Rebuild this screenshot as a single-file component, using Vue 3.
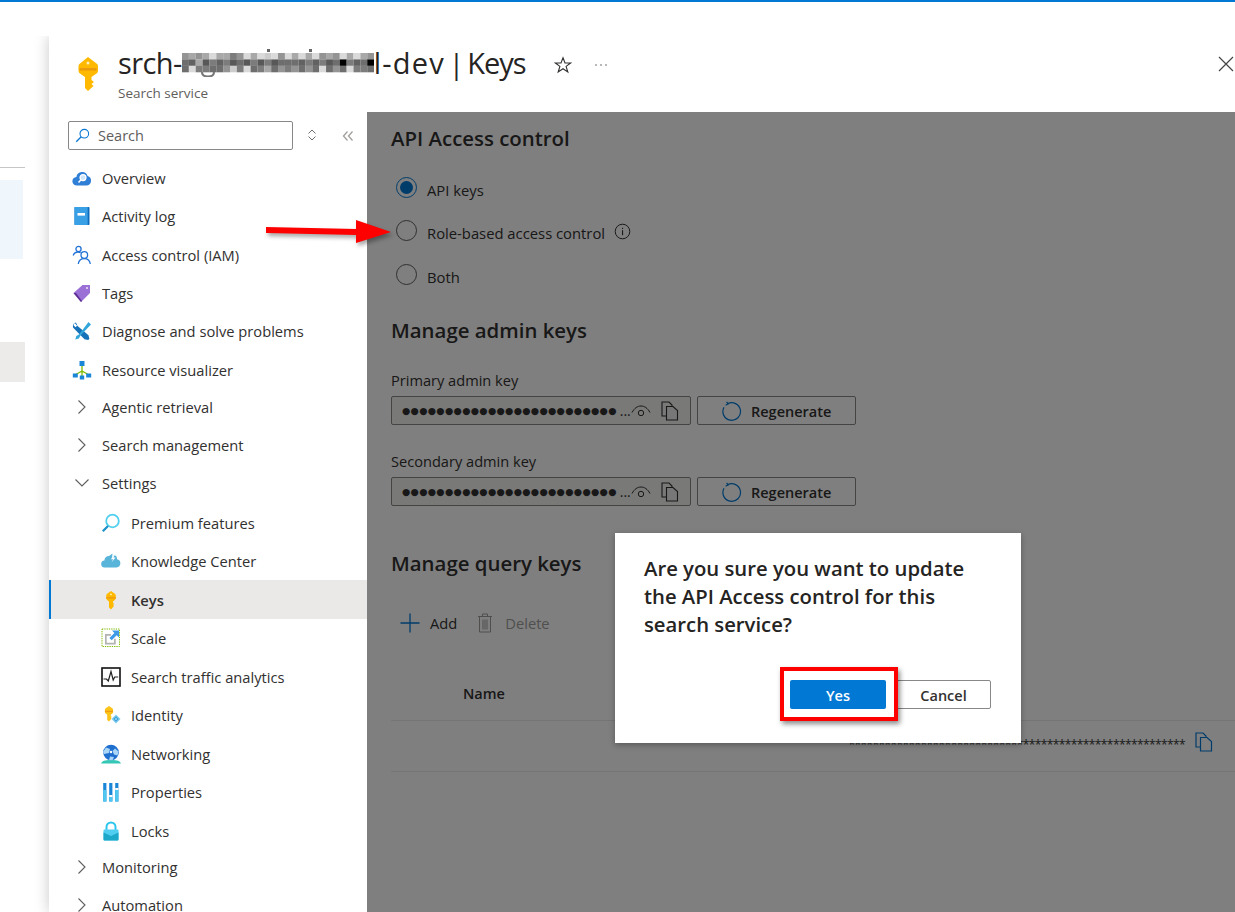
<script setup>
const icons = {
  overview: '<path d="M5 17.5a4.3 4.3 0 0 1-.6-8.6A5.8 5.8 0 0 1 15.6 8 4.9 4.9 0 0 1 15 17.5Z" fill="#2f7fd6"/><circle cx="11" cy="9.6" r="3" fill="#cfe6fb" stroke="#fff" stroke-width="1.2"/><path d="M9 11.8 6.5 14.4" stroke="#fff" stroke-width="1.5"/>',
  activity: '<rect x="2.5" y="1" width="15" height="18" rx=".8" fill="#0f6cbd"/><rect x="2.5" y="1" width="13.2" height="18" rx=".6" fill="#3aa0e6"/><rect x="5.500" y="7" width="7.500" height="2.600" fill="#fff"/>',
  iam: '<g fill="none" stroke="#2272d6" stroke-width="1.3"><circle cx="6.5" cy="4" r="2.6"/><path d="M1.2 10.5C2 8 4 7 6 7c1 0 2 .3 2.6.7"/><circle cx="12.3" cy="10" r="3.3"/><path d="M6.3 19c.4-3.2 2.8-5.3 6-5.3s5.500 2.100 6 5.300"/></g>',
  tags: '<path d="M1.500 10 10.500 2h7.500v8l-9 9Z" fill="#9a6fd6"/><path d="M1.500 10l7.500 9 1-1-6-8Z" fill="#5c2d91"/><circle cx="15" cy="5" r="1.100" fill="#e8dcf8"/>',
  diagnose: '<path d="M3.500 1.500a4 4 0 0 0-2.300 5.200l11.300 11.500 3.700.900 1.200-1.300-.9-3.500L5.300 4.800A4 4 0 0 0 3.500 1.500Z" fill="#1572b8"/><path d="M16.500 1l2.500 2.500-10.500 11-1.700 3-3.500 1 1-3.500 3-1.700Z" fill="#32a5d9"/><path d="M2.700 2l2.500 2.800-1.800 1.500-2-2.400Z" fill="#fff"/>',
  visualizer: '<path d="M10 5v6M3 15l7-4 7 4M10 11v6" stroke="#7fba00" stroke-width="1.300" fill="none"/><rect x="7.500" y="1" width="5" height="5" fill="#1a86d8"/><rect x=".8" y="13.500" width="5" height="4" fill="#1a86d8"/><rect x="14.200" y="13.500" width="5" height="4" fill="#1a86d8"/><rect x="7.800" y="15.500" width="4.400" height="4" fill="#1a86d8"/>',
  premium: '<circle cx="11.500" cy="8" r="6.300" fill="#fff" stroke="#50d0ee" stroke-width="1.800"/><path d="M7 13 1.800 18.200" stroke="#1a8fc8" stroke-width="2.200"/>',
  knowledge: '<path d="M4 16.500a3.500 3.500 0 0 1-.6-7A4.500 4.500 0 0 1 8 5l3.500-2.500L11 7l2-3a4 4 0 0 1 3 4.200 4.200 4.200 0 0 1-.5 8.300Z" fill="#59b4d9"/><path d="M12.800 3.500 10 8.200h2.200L10.500 11.500l4-5h-2.200L14 3.500Z" fill="#fff"/>',
  key: '<path d="M10 1l3.800 2.700c.7.500 1 1 1 1.800v2.500c0 .8-.4 1.400-1 1.900L12 11.500V13l1.200 1-1.200 1 1 1-3 3.500L8 17.500v-6L6.200 9.900c-.6-.5-1-1.100-1-1.900V5.500c0-.8.300-1.300 1-1.800Z" fill="#ffb900"/><rect x="5.200" y="7" width="9.600" height="1.600" fill="#f29c11"/><circle cx="10" cy="4.300" r=".9" fill="#fff3c4"/>',
  scale: '<rect x="1" y="1" width="17.500" height="17.500" fill="none" stroke="#7fba00" stroke-width="1" stroke-dasharray="1.300 1"/><path d="M4 6h6v1.700H5.700v7H13v-4h1.700v5.700H4Z" fill="#b3b3b3"/><path d="M11 2.500h7v7l-2.300-2.300-5 5-2.300-2.300 5-5Z" fill="#3e9ae6"/>',
  traffic: '<rect x="1" y="1" width="18" height="18" fill="#fff" stroke="#111" stroke-width="1.600"/><path d="M2.500 12h3l1.800 2 2.700-9.500 2.200 8.500 1.500-3h3.500" fill="none" stroke="#222" stroke-width="1.200"/>',
  identity: '<path d="M8 1l3.300 2.300c.6.400.8.900.8 1.500v2.200c0 .7-.3 1.200-.8 1.600L9.800 9.800V11l1 .9-1 .8.800.9L8 16.500 6.200 15V9.800L4.700 8.600c-.5-.4-.8-.9-.8-1.600V4.800c0-.6.200-1.100.8-1.500Z" fill="#fcc419"/><rect x="4" y="5.800" width="8" height="1.300" fill="#f29c11"/><path d="M15 9.500l4.500 4.500-4.500 4.500-4.500-4.500Z" fill="#7fcdee"/><path d="M15 11.800l2.200 2.200-2.200 2.200-2.200-2.200Z" fill="none" stroke="#2a8fd0" stroke-width=".9"/>',
  networking: '<path d="M0 19.500c1-2.500 3.500-3.500 10-3.500s9 1 10 3.500Z" fill="#35c7b5"/><circle cx="10" cy="8.500" r="7.800" fill="#1f6fcf"/><path d="M5 3.500l4 1.500-1 4-5 1-1-2Zm9 1 3.500 3-1 4-3.500-1-1.500-3.500Zm-5 8 4 .5-1.500 3.200H8Z" fill="#a9d6f7"/><circle cx="10" cy="8" r="1.200" fill="#fff"/>',
  properties: '<rect x="2.200" y="1" width="3.200" height="18.500" fill="#1a86d8"/><rect x="8.200" y="1" width="3.200" height="18.500" fill="#1a86d8"/><rect x="14.200" y="1" width="3.200" height="18.500" fill="#1a86d8"/><rect x="2.200" y="8" width="3.200" height="11.500" fill="#50c8f0"/><rect x="8.200" y="13" width="3.200" height="2" fill="#fff"/><rect x="8.200" y="15" width="3.200" height="4.500" fill="#50c8f0"/><rect x="14.200" y="6" width="3.200" height="2" fill="#fff"/><rect x="14.200" y="8" width="3.200" height="11.500" fill="#50c8f0"/>',
  locks: '<path d="M5.500 9V6a4.500 4.500 0 0 1 9 0v3" fill="none" stroke="#2cc5ee" stroke-width="2"/><rect x="2.500" y="8.500" width="15" height="11" rx="1" fill="#50cdf0"/><path d="M2.500 11.500 10 15l7.500-3.500v7a1 1 0 0 1-1 1h-13a1 1 0 0 1-1-1Z" fill="#1da7c9"/>'
}

const topItems = [
  { label: 'Overview', icon: 'overview' },
  { label: 'Activity log', icon: 'activity' },
  { label: 'Access control (IAM)', icon: 'iam' },
  { label: 'Tags', icon: 'tags' },
  { label: 'Diagnose and solve problems', icon: 'diagnose' },
  { label: 'Resource visualizer', icon: 'visualizer' }
]
const subItems = [
  { label: 'Premium features', icon: 'premium' },
  { label: 'Knowledge Center', icon: 'knowledge' },
  { label: 'Keys', icon: 'key', active: true },
  { label: 'Scale', icon: 'scale' },
  { label: 'Search traffic analytics', icon: 'traffic' },
  { label: 'Identity', icon: 'identity' },
  { label: 'Networking', icon: 'networking' },
  { label: 'Properties', icon: 'properties' },
  { label: 'Locks', icon: 'locks' }
]

const mosaic = [
  '6767a7756a7a9a6a7a7a676a7a76',
  '4372535242525244435352415341',
  '4a5544695a4574656464a464a554'
]
const shades = {
  2: '#585858', 3: '#626262', 4: '#6e6e6e', 5: '#7c7c7c', 6: '#949494',
  7: '#a8a8a8', 8: '#bcbcbc', 9: '#cccccc', a: '#dadada'
}
const cells = mosaic.flatMap((row, y) =>
  [...row].map((c, x) => ({ x: x * 6.86, y: 4 + y * 6.4, fill: shades[c] }))
)

const adminKeys = ['Primary admin key', 'Secondary admin key']
</script>

<template>
  <div class="page">
    <div class="topbar"></div>
    <div class="stage">
      <div class="behind">
        <div class="behind-line"></div>
        <div class="behind-blue"></div>
        <div class="behind-grey"></div>
      </div>

      <section class="blade">
        <header class="blade-head">
          <svg class="head-key" width="24" height="36" viewBox="0 0 24 36">
            <path d="M12 1l8.500 6.500c1 .8 1.500 1.700 1.500 3v4c0 1.300-.5 2.300-1.500 3L15.500 21v3l2.500 2-2.500 2 2 2-5.500 5-3-3V21l-5-3.500c-1-.7-1.500-1.700-1.500-3v-4c0-1.300.5-2.200 1.500-3Z" fill="#ffb900"/>
            <rect x="3.500" y="12" width="17" height="2.600" fill="#ea9a0c"/>
            <circle cx="12" cy="7" r="1.500" fill="#fff1c0"/>
          </svg>
          <div class="head-text">
            <h1 class="title"><span class="t-s">srch-</span><svg class="mosaic" width="192" height="28" viewBox="0 0 192 28"><rect v-for="(c, i) in cells" :key="i" :x="c.x" :y="c.y" width="6.900" height="6.500" :fill="c.fill" /><path d="M20 23c0 3 2 4.500 6 4.500s6-1.500 6-4.500" fill="none" stroke="#777" stroke-width="2"/><rect x="85" y="0" width="3" height="3" fill="#666"/><rect x="127" y="0" width="3" height="3" fill="#666"/></svg><span class="t-a">l-dev</span><span class="t-sep">|</span><span class="t-b">Keys</span></h1>
            <div class="subtitle">Search service</div>
          </div>
          <svg class="star" width="18" height="18" viewBox="0 0 18 18"><path d="M9 1.800 11 7h5.600l-4.500 3.400 1.700 5.600L9 12.700 4.200 16l1.700-5.600L1.400 7H7Z" fill="none" stroke="#323130" stroke-width="1.100"/></svg>
          <svg class="dots" width="14" height="4" viewBox="0 0 14 4"><circle cx="2" cy="2" r=".8" fill="#605e5c"/><circle cx="7" cy="2" r=".8" fill="#605e5c"/><circle cx="12" cy="2" r=".8" fill="#605e5c"/></svg>
          <svg class="close" width="16" height="16" viewBox="0 0 16 16"><path d="M1 1l14 14M15 1 1 15" stroke="#444" stroke-width="1.200"/></svg>
        </header>

        <div class="blade-body">
          <nav class="side">
            <div class="search-row">
              <div class="search">
                <svg width="15" height="15" viewBox="0 0 15 15"><circle cx="9.300" cy="5.700" r="4.300" fill="none" stroke="#0a78d2" stroke-width="1.100"/><path d="M6.200 8.800 1.200 13.800" stroke="#0a78d2" stroke-width="1.300"/></svg>
                <span>Search</span>
              </div>
              <svg class="updown" width="10" height="12" viewBox="0 0 10 12"><path d="M1.500 4.500 5 1l3.500 3.500M1.500 7.500 5 11l3.500-3.500" fill="none" stroke="#605e5c" stroke-width=".9"/></svg>
              <svg class="collapse" width="12" height="12" viewBox="0 0 12 12"><path d="M5.500 1.500 1.500 6l4 4.500M10.500 1.500 6.500 6l4 4.500" fill="none" stroke="#a19f9d" stroke-width="1.300"/></svg>
            </div>

            <div class="group">
              <div v-for="it in topItems" :key="it.label" class="row">
                <svg class="ico" width="20" height="20" viewBox="0 0 20 20" v-html="icons[it.icon]"></svg>
                <span>{{ it.label }}</span>
              </div>
            </div>

            <div class="group exp-group">
              <div class="row exp">
                <svg class="chev" width="20" height="20" viewBox="0 0 20 20"><path d="M6.500 3.500 13 10l-6.500 6.500" fill="none" stroke="#605e5c" stroke-width="1.100"/></svg>
                <span>Agentic retrieval</span>
              </div>
              <div class="row exp">
                <svg class="chev" width="20" height="20" viewBox="0 0 20 20"><path d="M6.500 3.500 13 10l-6.500 6.500" fill="none" stroke="#605e5c" stroke-width="1.100"/></svg>
                <span>Search management</span>
              </div>
              <div class="row exp">
                <svg class="chev" width="20" height="20" viewBox="0 0 20 20"><path d="M3.500 6.500 10 13l6.500-6.500" fill="none" stroke="#605e5c" stroke-width="1.100"/></svg>
                <span>Settings</span>
              </div>
            </div>

            <div class="group sub-group">
              <div v-for="it in subItems" :key="it.label" class="row sub" :class="{ active: it.active }">
                <svg class="ico" width="20" height="20" viewBox="0 0 20 20" v-html="icons[it.icon]"></svg>
                <span>{{ it.label }}</span>
              </div>
            </div>

            <div class="group tail-group">
              <div class="row exp">
                <svg class="chev" width="20" height="20" viewBox="0 0 20 20"><path d="M6.500 3.500 13 10l-6.500 6.500" fill="none" stroke="#605e5c" stroke-width="1.100"/></svg>
                <span>Monitoring</span>
              </div>
              <div class="row exp">
                <svg class="chev" width="20" height="20" viewBox="0 0 20 20"><path d="M6.500 3.500 13 10l-6.500 6.500" fill="none" stroke="#605e5c" stroke-width="1.100"/></svg>
                <span>Automation</span>
              </div>
            </div>
          </nav>

          <main class="content">
            <h2 class="h-access">API Access control</h2>
            <div class="radios">
              <label class="radio on"><i></i><span>API keys</span></label>
              <label class="radio"><i></i><span>Role-based access control</span>
                <svg class="info" width="17" height="17" viewBox="0 0 17 17"><circle cx="8.500" cy="8.500" r="7.300" fill="none" stroke="#323130" stroke-width="1"/><rect x="8" y="7.200" width="1.100" height="5" fill="#323130"/><rect x="8" y="4.800" width="1.100" height="1.200" fill="#323130"/></svg>
              </label>
              <label class="radio"><i></i><span>Both</span></label>
            </div>

            <h2 class="h-admin">Manage admin keys</h2>
            <div v-for="k in adminKeys" :key="k" class="keyblock">
              <div class="key-label">{{ k }}</div>
              <div class="key-row">
                <div class="key-input">
                  <span class="bullets">●●●●●●●●●●●●●●●●●●●●●●●●●</span>
                  <span class="ell">...</span>
                  <svg class="eye" width="20" height="14" viewBox="0 0 20 14"><path d="M1 8.500C3.500 4 6.500 2 10 2s6.500 2 9 6.500" fill="none" stroke="#323130" stroke-width="1"/><circle cx="10" cy="9" r="2.700" fill="none" stroke="#323130" stroke-width="1"/></svg>
                  <svg class="copy" width="18" height="20" viewBox="0 0 18 20"><path d="M1 1h7l3 3v11H1Z" fill="none" stroke="#323130" stroke-width="1.100"/><path d="M5.500 5.500H12l4.500 4v9.500h-11Z" fill="#eee" stroke="#323130" stroke-width="1.100"/></svg>
                </div>
                <button class="regen">
                  <svg width="20" height="20" viewBox="0 0 20 20"><path d="M5.500 2.800A8.800 8.800 0 1 1 2 6.300" fill="none" stroke="#0078d4" stroke-width="1.200"/><path d="M4.600 .8l1.500 2.300-2.500 1.200" fill="none" stroke="#0078d4" stroke-width="1.200"/></svg>
                  <span>Regenerate</span>
                </button>
              </div>
            </div>

            <h2 class="h-query">Manage query keys</h2>
            <div class="toolbar">
              <svg width="20" height="20" viewBox="0 0 20 20"><path d="M10 .5v19M.5 10h19" stroke="#0078d4" stroke-width="1.300"/></svg>
              <span class="tb-add">Add</span>
              <svg class="tb-trash" width="16" height="20" viewBox="0 0 16 20"><path d="M1 3.500h14M5.500 3.500V1h5v2.500M2.500 3.500V19h11V3.500M6 6.500v10M8 6.500v10M10 6.500v10" fill="none" stroke="#a19f9d" stroke-width="1"/></svg>
              <span class="tb-del">Delete</span>
            </div>
            <div class="thead">Name</div>
            <div class="trow">
              <span class="stars">********************************************************</span>
              <svg class="trow-copy" width="18" height="20" viewBox="0 0 18 20"><path d="M1 1h7l3 3v11H1Z" fill="#fff" stroke="#0078d4" stroke-width="1.200"/><path d="M5.500 5.500H12l4.500 4v9.500h-11Z" fill="#fff" stroke="#0078d4" stroke-width="1.200"/></svg>
            </div>

            <div class="overlay">
              <div class="dialog">
                <p class="dlg-text">Are you sure you want to update the API Access control for this search service?</p>
                <div class="dlg-actions">
                  <div class="yes-wrap">
                    <button class="yes">Yes</button>
                    <span class="redbox"></span>
                  </div>
                  <button class="cancel">Cancel</button>
                </div>
              </div>
            </div>
          </main>
        </div>
      </section>
    </div>

    <svg class="arrow" width="140" height="36" viewBox="0 0 140 36">
      <path d="M6 9 96 11V2l35 12-35 11v-8L6 15Z" fill="#ff0000"/>
    </svg>
  </div>
</template>

<style>
html, body { margin: 0; padding: 0; background: #fff; overflow: hidden; }
</style>

<style scoped>
.page {
  position: relative;
  width: 1235px;
  height: 912px;
  overflow: hidden;
  background: #fff;
  font-family: "Open Sans", "Liberation Sans", sans-serif;
  color: #323130;
}
.topbar { height: 2px; background: #0078d4; }
.stage { display: flex; height: 910px; }
.behind { width: 25px; margin-right: 24px; flex: none; display: flex; flex-direction: column; }
.behind-line { height: 1px; background: #c8c6c4; margin-top: 165px; }
.behind-blue { width: 23px; height: 79px; margin-top: 12px; background: #eff6fc; }
.behind-grey { height: 40px; margin-top: 83px; background: #edebe9; }

.blade {
  flex: 1;
  margin-top: 34px;
  min-width: 0;
  display: flex;
  flex-direction: column;
  background: #fff;
  box-shadow: 0 0 14px rgba(0, 0, 0, .22);
  clip-path: inset(0 0 0 -30px);
}
.blade-head { height: 76px; flex: none; display: flex; align-items: flex-start; position: relative; }
.head-key { margin: 20px 0 0 27px; }
.head-text { margin: 10px 0 0 18px; }
.title {
  margin: 0;
  font-size: 29px;
  font-weight: 400;
  line-height: 34px;
  color: #252423;
  white-space: nowrap;
  display: flex;
  align-items: center;
}
.t-s { letter-spacing: -.6px; }
.t-a { letter-spacing: 1.200px; }
.t-sep { margin-left: 4px; font-size: 28px; }
.t-b { margin-left: 3px; letter-spacing: -1px; }
.mosaic { flex: none; }
.subtitle { font-size: 13.500px; line-height: 18px; color: #605e5c; margin-top: 4px; }
.star { margin: 20px 0 0 28px; }
.dots { margin: 27px 0 0 22px; flex: none; }
.close { position: absolute; right: 1px; top: 20px; }

.blade-body { flex: 1; display: flex; min-height: 0; }
.side { width: 318px; flex: none; overflow: hidden; }
.search-row { height: 46.700px; display: flex; align-items: flex-start; padding-left: 19px; }
.search {
  box-sizing: border-box;
  width: 225px;
  height: 29px;
  margin-top: 9px;
  border: 1px solid #8a8886;
  border-radius: 2px;
  display: flex;
  align-items: center;
  gap: 8px;
  padding-left: 6px;
  font-size: 14.500px;
  color: #605e5c;
}
.updown { margin: 17px 0 0 14px; }
.collapse { margin: 18px 0 0 25px; }

.row {
  height: 38.400px;
  display: flex;
  align-items: center;
  font-size: 14.700px;
  line-height: 14px;
  white-space: nowrap;
  padding-left: 23px;
  box-sizing: border-box;
}
.ico { margin-right: 10px; flex: none; }
.exp { height: 38px; }
.chev { margin-right: 10px; flex: none; }
.exp-group { margin-top: -1.100px; }
.sub-group { margin-top: 1.500px; }
.sub { padding-left: 52px; height: 38.500px; }
.tail-group { margin-top: -2px; }
.active { background: #ebe9e7; font-weight: 600; border-left: 2px solid #0078d4; padding-left: 50px; }

.content { flex: 1; position: relative; padding-left: 24px; min-width: 0; overflow: hidden; background: #fff; }
h2 { margin: 0; font-size: 20.400px; font-weight: 600; line-height: 28px; }
.h-access { margin-top: 12px; }
.radios { margin-top: 24.500px; }
.radio { display: flex; align-items: flex-start; height: 43.500px; font-size: 14.800px; padding-left: 5px; }
.radio i {
  width: 19px;
  height: 19px;
  border: 1px solid #605e5c;
  border-radius: 50%;
  flex: none;
  margin-right: 10px;
  position: relative;
}
.radio span { padding-top: 3px; line-height: 20px; }
.on i { border-color: #0078d4; }
.on i::after {
  content: "";
  position: absolute;
  inset: 3px;
  border-radius: 50%;
  background: #0078d4;
}
.info { margin: 3px 0 0 9px; }
.h-admin { margin-top: 9px; }
.keyblock + .keyblock { margin-top: 26px; }
.h-admin + .keyblock { margin-top: 26px; }
.key-label { font-size: 14.600px; line-height: 20px; color: #323130; margin-bottom: 6px; }
.key-row { display: flex; gap: 6px; }
.key-input {
  box-sizing: border-box;
  width: 300px;
  height: 29px;
  background: #f3f2f1;
  border: 1px solid #8a8886;
  border-radius: 2px;
  display: flex;
  align-items: center;
  padding-left: 10px;
  position: relative;
}
.bullets { font-family: "DejaVu Sans", sans-serif; font-size: 9.500px; letter-spacing: .3px; white-space: nowrap; }
.ell { font-size: 14px; margin-left: 3px; }
.eye { flex: none; }
.copy { margin-left: 10px; flex: none; }
.regen {
  box-sizing: border-box;
  width: 159px;
  height: 29px;
  display: flex;
  align-items: center;
  gap: 9px;
  padding: 0 0 0 24px;
  border: 1px solid #8a8886;
  border-radius: 2px;
  background: #fff;
  color: #323130;
  font: 600 14.500px "Open Sans", sans-serif;
}
.regen span { padding-top: 1px; }
.h-query { margin-top: 43px; }
.toolbar { display: flex; align-items: center; margin: 34px 0 0 9px; height: 24px; font-size: 14.700px; }
.tb-add { margin-left: 10px; }
.tb-trash { margin-left: 20px; }
.tb-del { margin-left: 12px; color: #a19f9d; }
.thead {
  margin-top: 49px;
  height: 36px;
  line-height: 20px;
  padding-left: 72px;
  font-size: 14.500px;
  font-weight: 600;
  border-bottom: 1px solid #edebe9;
}
.trow {
  box-sizing: border-box;
  height: 51px;
  border-bottom: 1px solid #edebe9;
  display: flex;
  align-items: center;
  justify-content: flex-end;
  padding-right: 22px;
  gap: 10px;
  font-size: 12px;
}
.stars { letter-spacing: -.6px; white-space: nowrap; margin-top: -3px; }
.trow-copy { margin-top: -8px; }

.overlay { position: absolute; inset: 0; background: rgba(0, 0, 0, .5); }
.dialog {
  position: absolute;
  left: 248px;
  top: 421px;
  box-sizing: border-box;
  width: 406px;
  height: 210px;
  background: #fff;
  padding: 21px 30px 0 29px;
  box-shadow: 0 2px 6px rgba(0, 0, 0, .3);
}
.dlg-text { margin: 0; font-size: 20.300px; font-weight: 600; line-height: 28px; color: #252423; }
.dlg-actions { display: flex; justify-content: flex-end; gap: 8px; margin-top: 42px; }
.yes-wrap { position: relative; }
.yes {
  display: block;
  width: 96px;
  height: 29px;
  border: 0;
  border-radius: 2px;
  background: #0078d4;
  color: #fff;
  padding: 1px 0 0;
  font: 600 14.500px "Open Sans", sans-serif;
}
.cancel {
  box-sizing: border-box;
  width: 97px;
  height: 29px;
  border: 1px solid #8a8886;
  border-radius: 2px;
  background: #fff;
  color: #323130;
  padding: 1px 0 0 2px;
  font: 600 14.500px "Open Sans", sans-serif;
}
.redbox {
  position: absolute;
  left: -10px;
  right: -12px;
  top: -13px;
  bottom: -12px;
  border: 4px solid #f00;
  box-shadow: 2px 3px 5px rgba(0, 0, 0, .45);
}
.arrow {
  position: absolute;
  left: 260px;
  top: 218px;
  filter: drop-shadow(2px 3px 2px rgba(0, 0, 0, .35));
}
</style>
